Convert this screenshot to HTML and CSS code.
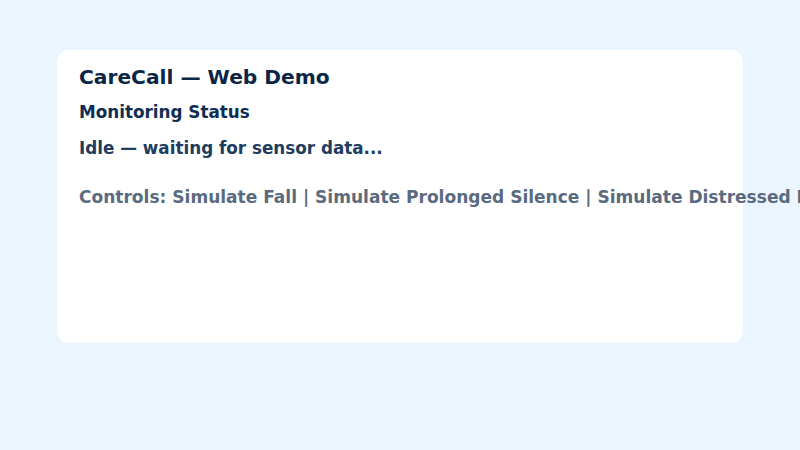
FILE: index.html
```html
<!DOCTYPE html>
<html lang="en">
<head>
<meta charset="utf-8">
<title>CareCall — Web Demo</title>
<link rel="stylesheet" href="styles.css">
</head>
<body>
<main class="card">
  <h1 class="title">CareCall — Web Demo</h1>
  <h2 class="subtitle">Monitoring Status</h2>
  <p class="status">Idle — waiting for sensor data...</p>
  <p class="controls">Controls: Simulate Fall | Simulate Prolonged Silence | Simulate Distressed Breathing</p>
</main>
</body>
</html>
```
FILE: styles.css
```css
html, body {
  margin: 0;
  padding: 0;
}
body {
  background: #ebf5ff;
  font-family: "DejaVu Sans", sans-serif;
  font-weight: bold;
  padding: 50px 57px;
  overflow: hidden;
  height: 450px;
  box-sizing: border-box;
}
.card {
  background: #ffffff;
  border-radius: 12px;
  height: 293px;
  box-sizing: border-box;
  padding: 15px 22px;
  white-space: nowrap;
}
.title {
  margin: 0;
  font-size: 20.2px;
  line-height: 24px;
  color: #0b2545;
}
.subtitle {
  margin: 12px 0 0;
  font-size: 16.8px;
  line-height: 22px;
  color: #0d2e52;
}
.status {
  margin: 14px 0 0;
  font-size: 16.8px;
  line-height: 22px;
  color: #203c5e;
}
.controls {
  margin: 27px 0 0;
  font-size: 17.04px;
  line-height: 22px;
  color: #5a6b80;
}
```
